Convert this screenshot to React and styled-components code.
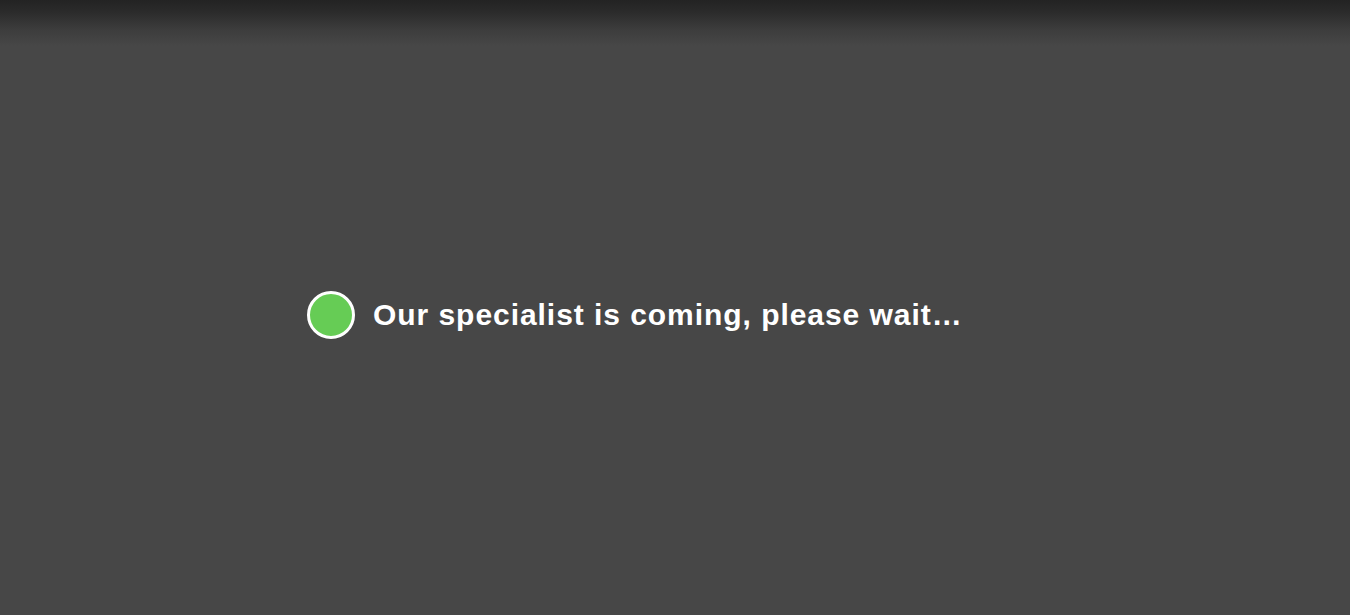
import React from 'react';
import styled, { createGlobalStyle } from 'styled-components';

const GlobalStyle = createGlobalStyle`
  html, body {
    margin: 0;
    padding: 0;
    background: #474747;
  }
  body {
    font-family: 'Liberation Sans', Arial, sans-serif;
  }
`;

const Screen = styled.div`
  width: 1350px;
  height: 615px;
  background: linear-gradient(to bottom, #232323 0px, #2b2b2b 12px, #3d3d3d 30px, #474747 46px, #474747 100%);
  display: flex;
  align-items: flex-start;
  padding: 291px 0 0 307px;
  box-sizing: border-box;
`;

const Status = styled.div`
  display: flex;
  align-items: center;
  gap: 18px;
`;

const Dot = styled.span`
  width: 42px;
  height: 42px;
  border-radius: 50%;
  background: ${(p) => p.color};
  border: 3px solid #ffffff;
  flex-shrink: 0;
`;

const Message = styled.h1`
  margin: 0;
  font-size: 30px;
  line-height: 34px;
  font-weight: 700;
  color: #ffffff;
  letter-spacing: 0.95px;
  white-space: nowrap;
`;

export default function App() {
  return (
    <>
      <GlobalStyle />
      <Screen>
        <Status>
          <Dot color="#66cc55" />
          <Message>Our specialist is coming, please wait…</Message>
        </Status>
      </Screen>
    </>
  );
}
